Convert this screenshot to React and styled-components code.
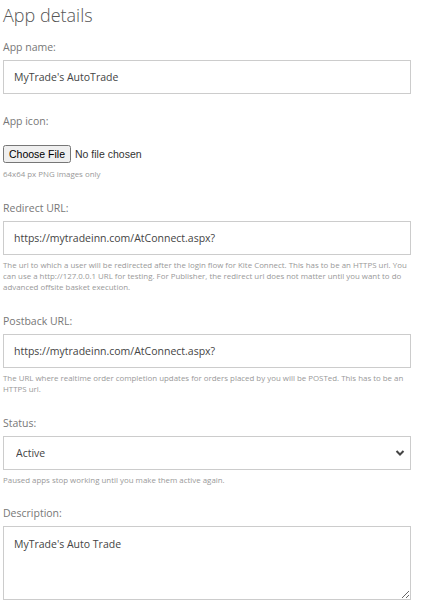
import styled, { createGlobalStyle } from "styled-components";

const GlobalStyle = createGlobalStyle`
  body {
    margin: 0;
    background: #fff;
    font-family: "Open Sans", "Liberation Sans", sans-serif;
  }
`;

const Form = styled.form`
  width: 408px;
  margin-left: 3px;
  padding-top: 2px;
`;

const Heading = styled.h2`
  margin: 0 0 12px;
  font-size: 18px;
  line-height: 26px;
  font-weight: 300;
  color: #555;
`;

const Field = styled.div`
  margin-bottom: ${(p) => (p.$tight ? "20px" : "21px")};
`;

const Label = styled.label`
  display: block;
  margin-bottom: 6px;
  font-size: 10.5px;
  line-height: 14px;
  color: #777;
`;

const TextInput = styled.input`
  display: block;
  box-sizing: border-box;
  width: 100%;
  height: 34px;
  padding: 0 10px;
  border: 1px solid #ccc;
  border-radius: 0;
  font-family: "Open Sans", "Liberation Sans", sans-serif;
  font-size: 10.5px;
  color: #444;
  outline: none;
`;

const FileInput = styled.input`
  display: block;
  margin-top: 17px;
  font-family: "Liberation Sans", Arial, sans-serif;
  font-size: 10.5px;
  color: #333;

  &::file-selector-button {
    height: 18px;
    padding: 0 4px;
    margin-right: 4px;
    font: inherit;
  }
`;

const Help = styled.p`
  margin: ${(p) => (p.$after ? "6px 0 1px" : "5px 0 0")};
  font-size: 7.9px;
  line-height: 11px;
  color: #999;
`;

const SelectWrap = styled.div`
  position: relative;
`;

const Select = styled.select`
  display: block;
  box-sizing: border-box;
  width: 100%;
  height: 34px;
  padding: 0 12px;
  border: 1px solid #ccc;
  border-radius: 0;
  background: #fff;
  appearance: none;
  font-family: "Open Sans", "Liberation Sans", sans-serif;
  font-size: 10.5px;
  color: #444;
  outline: none;
`;

const Chevron = styled.svg`
  position: absolute;
  right: 6px;
  top: 13px;
  width: 10px;
  height: 8px;
  pointer-events: none;
`;

const TextArea = styled.textarea`
  display: block;
  box-sizing: border-box;
  width: 100%;
  height: 74px;
  padding: 8px 10px;
  border: 1px solid #ccc;
  border-radius: 0;
  font-family: "Open Sans", "Liberation Sans", sans-serif;
  font-size: 10.5px;
  line-height: 18px;
  color: #444;
  outline: none;
`;

export default function App() {
  return (
    <>
      <GlobalStyle />
      <Form onSubmit={(e) => e.preventDefault()}>
        <Heading>App details</Heading>

        <Field $tight>
          <Label>App name:</Label>
          <TextInput defaultValue="MyTrade's AutoTrade" />
        </Field>

        <Field>
          <Label>App icon:</Label>
          <FileInput type="file" />
          <Help $after>64x64 px PNG images only</Help>
        </Field>

        <Field>
          <Label>Redirect URL:</Label>
          <TextInput defaultValue="https://mytradeinn.com/AtConnect.aspx?" />
          <Help>
            The url to which a user will be redirected after the login flow for
            Kite Connect. This has to be an HTTPS url. You can use a
            http://127.0.0.1 URL for testing. For Publisher, the redirect url
            does not matter until you want to do advanced offsite basket
            execution.
          </Help>
        </Field>

        <Field>
          <Label>Postback URL:</Label>
          <TextInput defaultValue="https://mytradeinn.com/AtConnect.aspx?" />
          <Help>
            The URL where realtime order completion updates for orders placed by
            you will be POSTed. This has to be an HTTPS url.
          </Help>
        </Field>

        <Field $tight>
          <Label>Status:</Label>
          <SelectWrap>
            <Select defaultValue="active">
              <option value="active">Active</option>
              <option value="paused">Paused</option>
            </Select>
            <Chevron viewBox="0 0 10 8">
              <polyline
                points="1.5,2 5,5.5 8.5,2"
                fill="none"
                stroke="#444"
                strokeWidth="2"
              />
            </Chevron>
          </SelectWrap>
          <Help>Paused apps stop working until you make them active again.</Help>
        </Field>

        <Field>
          <Label>Description:</Label>
          <TextArea defaultValue="MyTrade's Auto Trade" />
        </Field>
      </Form>
    </>
  );
}
